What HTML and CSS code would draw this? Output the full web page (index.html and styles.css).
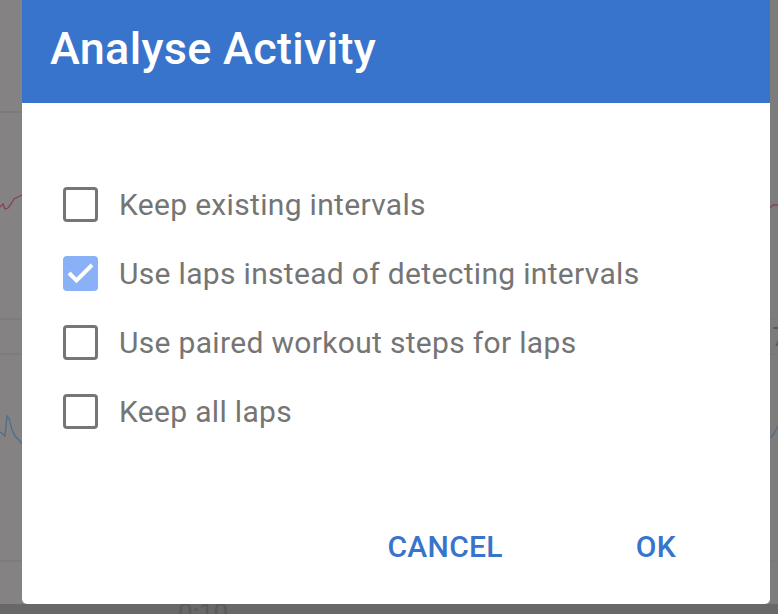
FILE: index.html
```html
<!DOCTYPE html>
<html lang="en">
	<head>
		<meta charset="UTF-8">
		<title>Analyse Activity</title>
		<link rel="stylesheet" href="styles.css">
	</head>
	<body>
		<svg class="backdrop" width="778" height="614" viewBox="0 0 778 614">
			<rect x="0" y="0" width="778" height="614" fill="#7b7b7b"/>
			<rect x="0" y="0" width="22" height="614" fill="#858283"/>
			<rect x="770" y="0" width="8" height="614" fill="#7c7c7c"/>
			<rect x="0" y="604" width="778" height="10" fill="#686868"/>
			<line x1="0" y1="112" x2="22" y2="112" stroke="#757273" stroke-width="1"/>
			<line x1="0" y1="319" x2="22" y2="319" stroke="#777" stroke-width="1"/>
			<line x1="0" y1="354" x2="22" y2="354" stroke="#777" stroke-width="1"/>
			<line x1="0" y1="561" x2="22" y2="561" stroke="#777" stroke-width="1"/>
			<line x1="770" y1="319" x2="778" y2="319" stroke="#777" stroke-width="1"/>
			<line x1="770" y1="354" x2="778" y2="354" stroke="#777" stroke-width="1"/>
			<line x1="770" y1="561" x2="778" y2="561" stroke="#777" stroke-width="1"/>
			<polyline points="0,207 3,204 5,209 8,208 11,204 14,199 18,197 22,195" fill="none" stroke="#8a4050" stroke-width="1.3"/>
			<polyline points="770,208 773,205 778,205" fill="none" stroke="#8a4050" stroke-width="1.3"/>
			<polyline points="0,432 3,434 5,436 7,416 9,418 12,430 15,436 19,440 22,444" fill="none" stroke="#4f6e8a" stroke-width="1.3"/>
			<polyline points="770,438 773,435 776,430 778,426" fill="none" stroke="#4f6e8a" stroke-width="1.3"/>
			<text x="772" y="346" class="axis">7</text>
			<text x="178" y="622" class="axis">0:10</text>
		</svg>

		<div class="dialog">
			<div class="dialogHeader">Analyse Activity</div>
			<div class="dialogBody">
				<label class="option"><span class="box"></span>Keep existing intervals</label>
				<label class="option"><span class="box checked"><svg width="35" height="35" viewBox="0 0 35 35"><polyline points="6,17 13.5,24.5 29,9" fill="none" stroke="#fff" stroke-width="4"/></svg></span>Use laps instead of detecting intervals</label>
				<label class="option"><span class="box"></span>Use paired workout steps for laps</label>
				<label class="option"><span class="box"></span>Keep all laps</label>
				<div class="actions">
					<span class="action">CANCEL</span>
					<span class="action">OK</span>
				</div>
			</div>
		</div>
	</body>
</html>
```

FILE: styles.css
```css
html, body {
	margin: 0;
	padding: 0;
	width: 778px;
	height: 614px;
	overflow: hidden;
	font-family: 'Roboto', 'Liberation Sans', sans-serif;
}
.backdrop {
	position: absolute;
	left: 0;
	top: 0;
}
.axis {
	font-family: 'Roboto', sans-serif;
	font-size: 26px;
	fill: #5a5a5a;
}
.dialog {
	position: relative;
	margin-left: 22px;
	width: 748px;
	background: #ffffff;
	border-radius: 0 0 5px 5px;
}
.dialogHeader {
	height: 103px;
	box-sizing: border-box;
	padding: 23px 0 0 28px;
	background: #3874cb;
	color: #ffffff;
	font-size: 45px;
	font-weight: 500;
	letter-spacing: 0.3px;
	line-height: 1.17;
}
.dialogBody {
	padding: 67px 0 22px 0;
	display: flex;
	flex-direction: column;
}
.option {
	height: 69px;
	display: flex;
	align-items: center;
	padding-left: 41px;
	font-size: 30px;
	color: #757575;
	letter-spacing: 0.32px;
}
.box {
	width: 35px;
	height: 35px;
	box-sizing: border-box;
	border: 3.5px solid #767676;
	border-radius: 4px;
	margin-right: 21px;
	flex: none;
}
.box.checked {
	border: none;
	background: #8ab0f7;
	display: flex;
}
.actions {
	margin-top: 64px;
	height: 72px;
	display: flex;
	justify-content: flex-end;
	align-items: center;
	gap: 69px;
	padding-right: 62px;
}
.action {
	padding: 0 32px;
	font-size: 30px;
	font-weight: 500;
	color: #3874cb;
	letter-spacing: 0.3px;
}
```
